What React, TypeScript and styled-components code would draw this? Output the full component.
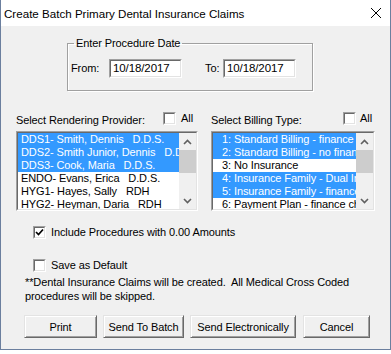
import React from 'react';
import styled, { createGlobalStyle } from 'styled-components';

const Global = createGlobalStyle`
  html, body { margin: 0; padding: 0; background: #ffffff; }
  body { font-family: "Liberation Sans", Arial, sans-serif; font-size: 11px; letter-spacing: -0.1px; color: #000; }
  * { box-sizing: border-box; }
`;

const Window = styled.div`
  width: 391px;
  height: 350px;
  border-left: 1px solid #6b7f9e;
  border-right: 1px solid #6b7f9e;
  border-bottom: 1px solid #6b7f9e;
  display: flex;
  flex-direction: column;
  background: #f0f0f0;
`;

const TitleBar = styled.div`
  height: 26px;
  flex: none;
  background: #ffffff;
  display: flex;
  align-items: center;
  padding-left: 3px;
  padding-right: 9px;
`;

const Title = styled.span`
  font-family: "Liberation Sans", Arial, sans-serif;
  font-size: 11.6px;
  letter-spacing: 0;
  color: #000;
  white-space: nowrap;
`;

const CloseIcon = styled.svg`
  margin-left: auto;
  width: 10px;
  height: 10px;
`;

const Content = styled.div`
  flex: 1;
  display: flex;
  flex-direction: column;
  padding-left: 15px;
`;

const DateGroup = styled.fieldset`
  margin: 11px 0 0 51px;
  width: 246px;
  height: 54px;
  padding: 0 3px;
  border: 1px solid #a0a0a0;
  box-shadow: inset 1px 1px 0 #ffffff, 1px 1px 0 #ffffff;
  min-width: 0;
`;

const GroupLegend = styled.legend`
  margin-left: 3px;
  padding: 0 2px;
  line-height: 13px;
  font-size: 11px;
`;

const DateRow = styled.div`
  display: flex;
  align-items: center;
  margin-top: 9px;
`;

const FieldLabel = styled.span<{ $w: number; $ml?: number }>`
  width: ${(p) => p.$w}px;
  margin-left: ${(p) => p.$ml ?? 0}px;
  line-height: 13px;
  flex: none;
`;

const SunkenOuter = styled.div<{ $w?: number; $h: number }>`
  ${(p) => (p.$w ? `width: ${p.$w}px;` : '')}
  height: ${(p) => p.$h}px;
  flex: none;
  border: 1px solid;
  border-color: #a0a0a0 #ffffff #ffffff #a0a0a0;
`;

const SunkenInner = styled.div`
  width: 100%;
  height: 100%;
  border: 1px solid;
  border-color: #696969 #e3e3e3 #e3e3e3 #696969;
  background: #ffffff;
  display: flex;
  overflow: hidden;
`;

const DateText = styled.span`
  padding-left: 2px;
  line-height: 15px;
  font-size: 11.5px;
`;

const ListsRow = styled.div`
  display: flex;
  gap: 13px;
  margin-top: 21px;
`;

const ListColumn = styled.div<{ $w: number }>`
  width: ${(p) => p.$w}px;
  display: flex;
  flex-direction: column;
`;

const ListHeader = styled.div`
  height: 14px;
  display: flex;
  align-items: flex-start;
`;

const HeaderLabel = styled.span`
  margin-top: 2px;
  line-height: 13px;
  white-space: nowrap;
`;

const AllCheck = styled.label<{ $mr: number; $gap: number }>`
  margin-left: auto;
  margin-right: ${(p) => p.$mr}px;
  display: flex;
  align-items: center;
  gap: ${(p) => p.$gap}px;
  height: 13px;
  line-height: 13px;
`;

const ListWrap = styled.div`
  margin-top: 5px;
`;

const Items = styled.div`
  flex: 1;
  overflow: hidden;
  display: flex;
  flex-direction: column;
`;

const Item = styled.div<{ $sel: boolean; $pl: number }>`
  height: 13px;
  flex: none;
  line-height: 13px;
  white-space: pre;
  padding-left: ${(p) => p.$pl}px;
  background: ${(p) => (p.$sel ? '#3399ff' : '#ffffff')};
  color: ${(p) => (p.$sel ? '#ffffff' : '#000000')};
  overflow: hidden;
`;

const ScrollBar = styled.div`
  width: 17px;
  flex: none;
  background: #f0f0f0;
  display: flex;
  flex-direction: column;
`;

const ScrollBtn = styled.div<{ $bottom?: boolean }>`
  height: 17px;
  flex: none;
  display: flex;
  align-items: center;
  justify-content: center;
  ${(p) => (p.$bottom ? 'margin-top: auto;' : '')}
`;

const Thumb = styled.div`
  height: 23px;
  flex: none;
  background: #cdcdcd;
`;

const CheckOuter = styled.div`
  width: 13px;
  height: 13px;
  flex: none;
  border: 1px solid;
  border-color: #a0a0a0 #ffffff #ffffff #a0a0a0;
`;

const CheckInner = styled.div`
  width: 100%;
  height: 100%;
  border: 1px solid;
  border-color: #696969 #e3e3e3 #e3e3e3 #696969;
  background: #ffffff;
  display: flex;
  align-items: center;
  justify-content: center;
`;

const OptionRow = styled.label<{ $mt: number }>`
  display: flex;
  align-items: center;
  gap: 5px;
  height: 13px;
  margin-top: ${(p) => p.$mt}px;
  margin-left: 17px;
  line-height: 13px;
`;

const Note = styled.p`
  margin: 3px 0 0 9px;
  line-height: 14px;
  white-space: pre;
`;

const ButtonRow = styled.div`
  display: flex;
  gap: 6px;
  margin: 12px 0 0 8px;
`;

const Button = styled.button<{ $w: number; $ml?: number }>`
  width: ${(p) => p.$w}px;
  height: 23px;
  margin-left: ${(p) => p.$ml ?? 0}px;
  padding: 0;
  font-family: "Liberation Sans", Arial, sans-serif;
  font-size: 11px;
  letter-spacing: -0.1px;
  color: #000;
  background: #f0f0f0;
  border: 1px solid;
  border-color: #e3e3e3 #696969 #696969 #e3e3e3;
  box-shadow: inset 1px 1px 0 #ffffff, inset -1px -1px 0 #a0a0a0;
  white-space: nowrap;
`;

const Chevron: React.FC<{ up?: boolean }> = ({ up }) => (
  <svg width="9" height="6" viewBox="0 0 9 6">
    <polyline
      points={up ? '1,5 4.5,1.5 8,5' : '1,1 4.5,4.5 8,1'}
      fill="none"
      stroke="#606060"
      strokeWidth="1.6"
    />
  </svg>
);

const CheckBox: React.FC<{ checked?: boolean }> = ({ checked }) => (
  <CheckOuter>
    <CheckInner>
      {checked && (
        <svg width="9" height="9" viewBox="0 0 9 9">
          <polyline points="1,4 3.5,6.5 8,1.5" fill="none" stroke="#000" strokeWidth="1.7" />
        </svg>
      )}
    </CheckInner>
  </CheckOuter>
);

type Row = { text: string; sel: boolean };

const providers: Row[] = [
  { text: 'DDS1- Smith, Dennis   D.D.S.', sel: true },
  { text: 'DDS2- Smith Junior, Dennis   D.D.S.', sel: true },
  { text: 'DDS3- Cook, Maria   D.D.S.', sel: true },
  { text: 'ENDO- Evans, Erica   D.D.S.', sel: false },
  { text: 'HYG1- Hayes, Sally   RDH', sel: false },
  { text: 'HYG2- Heyman, Daria   RDH', sel: false },
];

const billing: Row[] = [
  { text: '1: Standard Billing - finance charges', sel: true },
  { text: '2: Standard Billing - no finance charges', sel: true },
  { text: '3: No Insurance', sel: false },
  { text: '4: Insurance Family - Dual Insurance', sel: true },
  { text: '5: Insurance Family - finance charges', sel: true },
  { text: '6: Payment Plan - finance charges', sel: false },
];

const ListBox: React.FC<{ rows: Row[]; pl: number }> = ({ rows, pl }) => (
  <ListWrap>
    <SunkenOuter $h={80}>
      <SunkenInner>
        <Items>
          {rows.map((r) => (
            <Item key={r.text} $sel={r.sel} $pl={pl}>
              {r.text}
            </Item>
          ))}
        </Items>
        <ScrollBar>
          <ScrollBtn>
            <Chevron up />
          </ScrollBtn>
          <Thumb />
          <ScrollBtn $bottom>
            <Chevron />
          </ScrollBtn>
        </ScrollBar>
      </SunkenInner>
    </SunkenOuter>
  </ListWrap>
);

export default function App() {
  return (
    <>
      <Global />
      <Window>
        <TitleBar>
          <Title>Create Batch Primary Dental Insurance Claims</Title>
          <CloseIcon viewBox="0 0 10 10">
            <line x1="0" y1="0" x2="10" y2="10" stroke="#000" strokeWidth="1" />
            <line x1="10" y1="0" x2="0" y2="10" stroke="#000" strokeWidth="1" />
          </CloseIcon>
        </TitleBar>
        <Content>
          <DateGroup>
            <GroupLegend>Enter Procedure Date</GroupLegend>
            <DateRow>
              <FieldLabel $w={38}>From:</FieldLabel>
              <SunkenOuter $w={73} $h={19}>
                <SunkenInner>
                  <DateText>10/18/2017</DateText>
                </SunkenInner>
              </SunkenOuter>
              <FieldLabel $w={18} $ml={23}>
                To:
              </FieldLabel>
              <SunkenOuter $w={73} $h={19}>
                <SunkenInner>
                  <DateText>10/18/2017</DateText>
                </SunkenInner>
              </SunkenOuter>
            </DateRow>
          </DateGroup>

          <ListsRow>
            <ListColumn $w={182}>
              <ListHeader>
                <HeaderLabel>Select Rendering Provider:</HeaderLabel>
                <AllCheck $mr={5} $gap={5}>
                  <CheckBox />
                  All
                </AllCheck>
              </ListHeader>
              <ListBox rows={providers} pl={3} />
            </ListColumn>
            <ListColumn $w={164}>
              <ListHeader>
                <HeaderLabel>Select Billing Type:</HeaderLabel>
                <AllCheck $mr={3} $gap={4}>
                  <CheckBox />
                  All
                </AllCheck>
              </ListHeader>
              <ListBox rows={billing} pl={9} />
            </ListColumn>
          </ListsRow>

          <OptionRow $mt={15}>
            <CheckBox checked />
            Include Procedures with 0.00 Amounts
          </OptionRow>
          <OptionRow $mt={20}>
            <CheckBox />
            Save as Default
          </OptionRow>
          <Note>
            {'**Dental Insurance Claims will be created.  All Medical Cross Coded\nprocedures will be skipped.'}
          </Note>

          <ButtonRow>
            <Button $w={73}>Print</Button>
            <Button $w={81}>Send To Batch</Button>
            <Button $w={106}>Send Electronically</Button>
            <Button $w={67} $ml={1}>
              Cancel
            </Button>
          </ButtonRow>
        </Content>
      </Window>
    </>
  );
}
